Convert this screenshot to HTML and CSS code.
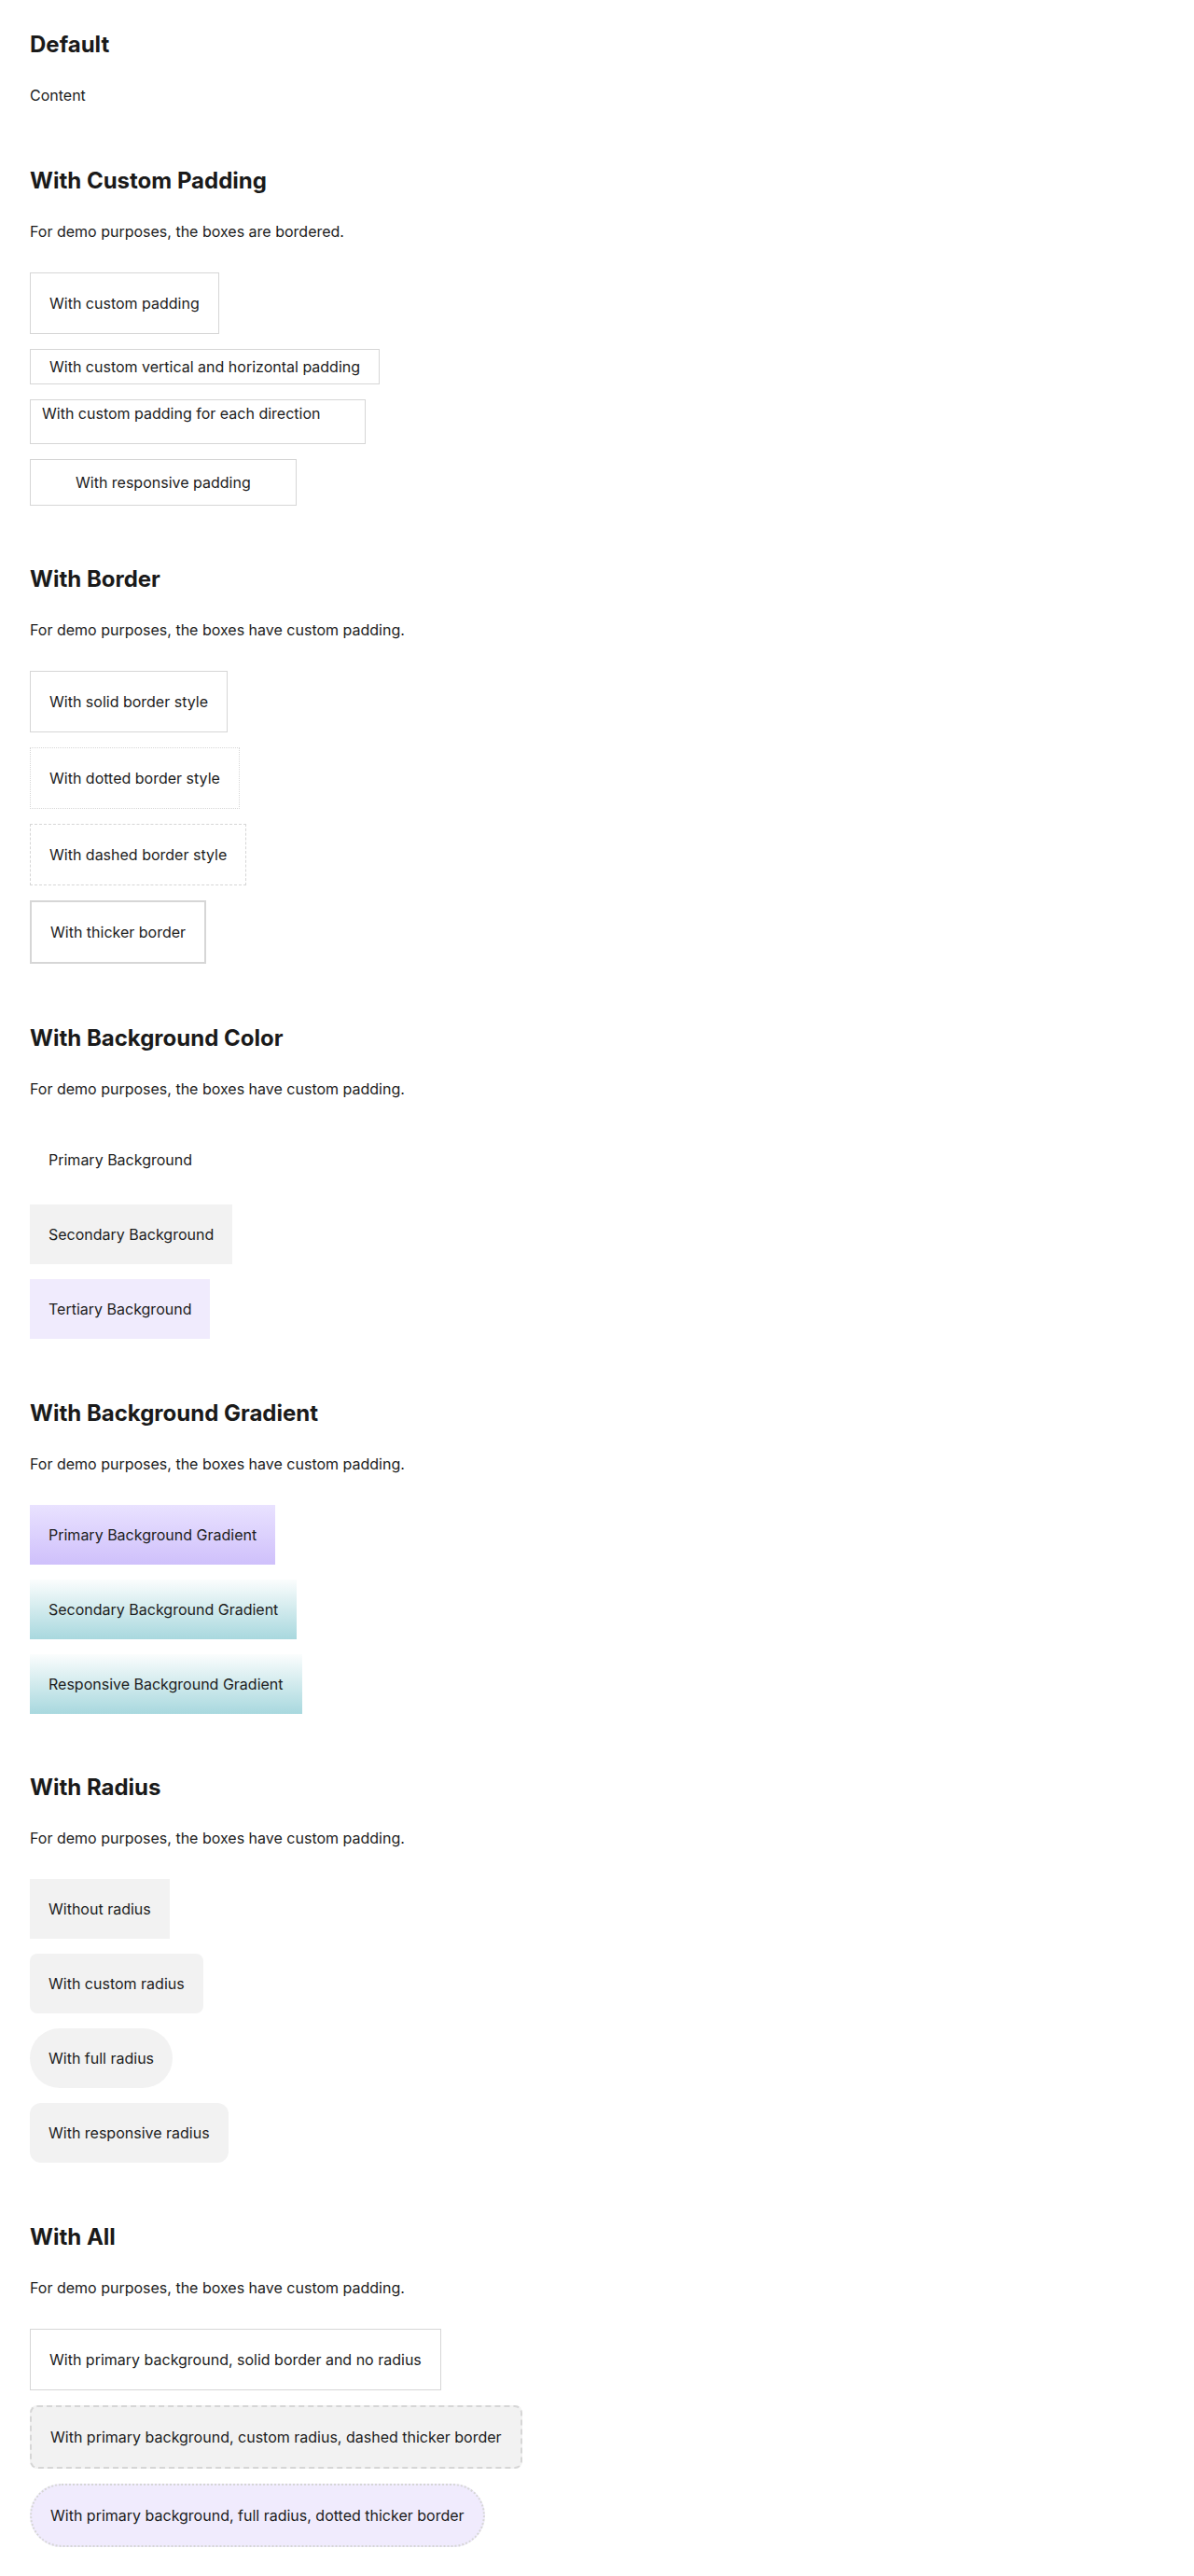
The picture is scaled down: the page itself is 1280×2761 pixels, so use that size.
FILE: index.html
```html
<!DOCTYPE html>
<html lang="en">
<head>
<meta charset="utf-8">
<title>Box</title>
<link rel="stylesheet" href="styles.css">
</head>
<body>
<main class="page">
  <section class="section">
    <h2 class="section-title">Default</h2>
    <div class="box">Content</div>
  </section>

  <section class="section">
    <h2 class="section-title">With Custom Padding</h2>
    <p class="section-desc">For demo purposes, the boxes are bordered.</p>
    <div class="stack">
      <div class="box border-solid pad-20">With custom padding</div>
      <div class="box border-solid pad-vh">With custom vertical and horizontal padding</div>
      <div class="box border-solid pad-each">With custom padding for each direction</div>
      <div class="box border-solid pad-resp">With responsive padding</div>
    </div>
  </section>

  <section class="section">
    <h2 class="section-title">With Border</h2>
    <p class="section-desc">For demo purposes, the boxes have custom padding.</p>
    <div class="stack">
      <div class="box pad-20 border-solid">With solid border style</div>
      <div class="box pad-20 border-dotted">With dotted border style</div>
      <div class="box pad-20 border-dashed">With dashed border style</div>
      <div class="box pad-20 border-thick">With thicker border</div>
    </div>
  </section>

  <section class="section">
    <h2 class="section-title">With Background Color</h2>
    <p class="section-desc">For demo purposes, the boxes have custom padding.</p>
    <div class="stack">
      <div class="box pad-20 bg-primary">Primary Background</div>
      <div class="box pad-20 bg-secondary">Secondary Background</div>
      <div class="box pad-20 bg-tertiary">Tertiary Background</div>
    </div>
  </section>

  <section class="section">
    <h2 class="section-title">With Background Gradient</h2>
    <p class="section-desc">For demo purposes, the boxes have custom padding.</p>
    <div class="stack">
      <div class="box pad-20 grad-primary">Primary Background Gradient</div>
      <div class="box pad-20 grad-secondary">Secondary Background Gradient</div>
      <div class="box pad-20 grad-secondary">Responsive Background Gradient</div>
    </div>
  </section>

  <section class="section">
    <h2 class="section-title">With Radius</h2>
    <p class="section-desc">For demo purposes, the boxes have custom padding.</p>
    <div class="stack">
      <div class="box pad-20 bg-secondary">Without radius</div>
      <div class="box pad-20 bg-secondary radius-md">With custom radius</div>
      <div class="box pad-20 bg-secondary radius-full">With full radius</div>
      <div class="box pad-20 bg-secondary radius-lg">With responsive radius</div>
    </div>
  </section>

  <section class="section">
    <h2 class="section-title">With All</h2>
    <p class="section-desc">For demo purposes, the boxes have custom padding.</p>
    <div class="stack">
      <div class="box pad-20 bg-primary border-solid">With primary background, solid border and no radius</div>
      <div class="box pad-20 bg-secondary border-dashed-thick radius-md">With primary background, custom radius, dashed thicker border</div>
      <div class="box pad-20 bg-tertiary border-dotted-thick radius-full">With primary background, full radius, dotted thicker border</div>
    </div>
  </section>
</main>
</body>
</html>
```

FILE: styles.css
```css
* {
  box-sizing: border-box;
}

html, body {
  margin: 0;
  padding: 0;
  background: #ffffff;
}

body {
  font-family: Inter, "Noto Sans", "Liberation Sans", sans-serif;
  font-size: 16px;
  line-height: 24px;
  color: #1c1c1c;
}

.page {
  display: flex;
  flex-direction: column;
  gap: 63.7px;
  padding: 32px;
}

.section {
  display: flex;
  flex-direction: column;
  align-items: flex-start;
}

.section-title {
  margin: 0 0 26px;
  font-size: 24px;
  line-height: 32px;
  font-weight: 700;
  color: #1a1a1a;
}

.section-desc {
  margin: 0 0 32px;
}

.stack {
  display: flex;
  flex-direction: column;
  align-items: flex-start;
  gap: 16px;
}

.box {
  display: block;
}

.pad-20 { padding: 20px; }
.pad-vh { padding: 6px 20px; }
.pad-each { padding: 2px 48px 20px 12px; }
.pad-resp { padding: 12px 48px; }

.border-solid { border: 1px solid #d6d6d6; }
.border-dotted { border: 1px dotted #d6d6d6; }
.border-dashed { border: 1px dashed #d6d6d6; }
.border-thick { border: 2px solid #d6d6d6; }
.border-dashed-thick { border: 2px dashed #d6d6d6; }
.border-dotted-thick { border: 2px dotted #d6d6d6; }

.bg-primary { background: #ffffff; }
.bg-secondary { background: #f2f2f2; }
.bg-tertiary { background: #f0ebfd; }

.grad-primary {
  background: linear-gradient(180deg, #e9e2ff 0%, #cfc0fb 100%);
}

.grad-secondary {
  background: linear-gradient(180deg, #fbfdfd 0%, #a8d8de 100%);
}

.radius-md { border-radius: 8px; }
.radius-lg { border-radius: 12px; }
.radius-full { border-radius: 9999px; }
```
